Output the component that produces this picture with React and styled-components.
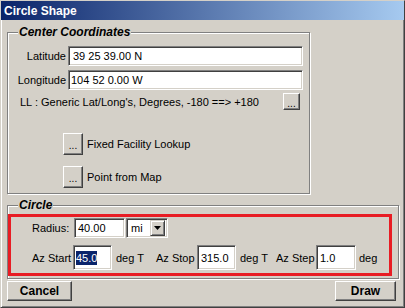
import React from "react";
import styled, { createGlobalStyle } from "styled-components";

const GlobalStyle = createGlobalStyle`
  html, body {
    margin: 0;
    padding: 0;
    background: #d4d0c8;
  }
  * {
    box-sizing: border-box;
  }
`;

const Window = styled.div`
  width: 405px;
  height: 308px;
  background: #d4d0c8;
  border: 1px solid;
  border-color: #d4d0c8 #404040 #404040 #d4d0c8;
  box-shadow: inset 1px 1px 0 #fff, inset -1px -1px 0 #808080;
  font-family: "Liberation Sans", Arial, sans-serif;
  font-size: 11px;
  color: #000;
  display: flex;
  flex-direction: column;
`;

const TitleBar = styled.div`
  height: 19px;
  flex: none;
  display: flex;
  align-items: center;
  padding-left: 3px;
  background: linear-gradient(to right, #0a246a, #a6caf0);
  color: #fff;
  font-weight: bold;
  font-size: 12px;
`;

const Body = styled.div`
  display: flex;
  flex-direction: column;
  padding: 12px 6px 0 6px;
`;

const Group = styled.div`
  position: relative;
  width: ${p => p.$width}px;
  margin-top: ${p => p.$top || 0}px;
  border: 1px solid #808080;
  box-shadow: 1px 1px 0 #fff, inset 1px 1px 0 #fff;
`;

const Caption = styled.span`
  position: absolute;
  top: -8px;
  left: 10px;
  padding: 0 1px;
  line-height: 14px;
  background: #d4d0c8;
  font-weight: bold;
  font-style: italic;
  font-size: 12px;
`;

const CoordGrid = styled.div`
  display: grid;
  grid-template-columns: 58px 235px;
  column-gap: 2px;
  row-gap: 4px;
  padding: 13px 6px 0 0;
  align-items: center;
`;

const FieldLabel = styled.label`
  text-align: right;
  white-space: nowrap;
`;

const TextBox = styled.div`
  height: ${p => p.$height || 20}px;
  width: ${p => (p.$width ? `${p.$width}px` : "auto")};
  background: #fff;
  border: 1px solid;
  border-color: #808080 #fff #fff #808080;
  box-shadow: inset 1px 1px 0 #404040, inset -1px -1px 0 #d4d0c8;
  display: flex;
  align-items: center;
  padding-left: ${p => p.$pad || 4}px;
  white-space: nowrap;
  flex: none;
`;

const Selected = styled.span`
  background: #0a246a;
  color: #fff;
  line-height: 14px;
`;

const LLRow = styled.div`
  display: flex;
  align-items: center;
  justify-content: space-between;
  margin-top: 3px;
  padding: 0 9px 0 12px;
`;

const RaisedButton = styled.button`
  width: ${p => p.$w}px;
  height: ${p => p.$h}px;
  padding: 0;
  flex: none;
  background: #d4d0c8;
  border: 1px solid;
  border-color: #fff #404040 #404040 #fff;
  box-shadow: inset -1px -1px 0 #808080, inset 1px 1px 0 #d4d0c8;
  font-family: "Liberation Sans", Arial, sans-serif;
  font-size: ${p => p.$size || 12}px;
  font-weight: ${p => (p.$bold ? "bold" : "normal")};
  color: #000;
  line-height: 1;
`;

const LookupList = styled.div`
  display: flex;
  flex-direction: column;
  gap: 11px;
  padding: 23px 0 5px 55px;
`;

const LookupRow = styled.div`
  display: flex;
  align-items: center;
  gap: 4px;
`;

const Highlight = styled.div`
  width: 384px;
  margin: 8px 0 2px 0;
  border: 3px solid #e81c24;
  display: flex;
  flex-direction: column;
  gap: 7px;
  padding: 1px 0 3px 21px;
`;

const ParamRow = styled.div`
  display: flex;
  align-items: center;
`;

const Cell = styled.span`
  width: ${p => p.$w}px;
  padding-left: ${p => p.$pl || 0}px;
  white-space: nowrap;
  flex: none;
`;

const Select = styled.div`
  display: flex;
  align-items: center;
  justify-content: space-between;
  width: 42px;
  height: 20px;
  margin-left: 1px;
  background: #fff;
  border: 1px solid;
  border-color: #808080 #fff #fff #808080;
  box-shadow: inset 1px 1px 0 #404040, inset -1px -1px 0 #d4d0c8;
  padding: 2px 2px 2px 4px;
`;

const DropButton = styled.div`
  width: 15px;
  height: 16px;
  background: #d4d0c8;
  border: 1px solid;
  border-color: #d4d0c8 #404040 #404040 #d4d0c8;
  box-shadow: inset 1px 1px 0 #fff, inset -1px -1px 0 #808080;
  display: flex;
  align-items: center;
  justify-content: center;
`;

const Footer = styled.div`
  display: flex;
  justify-content: space-between;
  margin-top: 2px;
  padding-right: 2px;
`;

const Dots = styled.span`
  position: relative;
  top: 2px;
`;

export default function App() {
  return (
    <>
      <GlobalStyle />
      <Window>
        <TitleBar>Circle Shape</TitleBar>
        <Body>
          <Group $width={303}>
            <Caption>Center Coordinates</Caption>
            <CoordGrid>
              <FieldLabel>Latitude</FieldLabel>
              <TextBox>39 25 39.00 N</TextBox>
              <FieldLabel>Longitude</FieldLabel>
              <TextBox $pad={2}>104 52 0.00 W</TextBox>
            </CoordGrid>
            <LLRow>
              <span>LL : Generic Lat/Long's, Degrees, -180 ==&gt; +180</span>
              <RaisedButton $w={17} $h={17} $size={10}>
                <Dots>...</Dots>
              </RaisedButton>
            </LLRow>
            <LookupList>
              <LookupRow>
                <RaisedButton $w={20} $h={22} $size={10}>
                  <Dots>...</Dots>
                </RaisedButton>
                <span>Fixed Facility Lookup</span>
              </LookupRow>
              <LookupRow>
                <RaisedButton $w={20} $h={22} $size={10}>
                  <Dots>...</Dots>
                </RaisedButton>
                <span>Point from Map</span>
              </LookupRow>
            </LookupList>
          </Group>

          <Group $width={392} $top={11}>
            <Caption>Circle</Caption>
            <Highlight>
              <ParamRow>
                <Cell $w={42}>Radius:</Cell>
                <TextBox $width={51} $pad={3}>
                  40.00
                </TextBox>
                <Select>
                  <span>mi</span>
                  <DropButton>
                    <svg width="7" height="4" viewBox="0 0 7 4">
                      <path d="M0 0h7L3.5 4z" fill="#000" />
                    </svg>
                  </DropButton>
                </Select>
              </ParamRow>
              <ParamRow>
                <Cell $w={41}>Az Start</Cell>
                <TextBox $width={39} $height={25} $pad={2}>
                  <Selected>45.0</Selected>
                </TextBox>
                <Cell $w={44} $pl={4}>deg T</Cell>
                <Cell $w={41}>Az Stop</Cell>
                <TextBox $width={39} $height={25} $pad={3}>
                  315.0
                </TextBox>
                <Cell $w={40} $pl={4}>deg T</Cell>
                <Cell $w={40}>Az Step</Cell>
                <TextBox $width={40} $height={25} $pad={3}>
                  1.0
                </TextBox>
                <Cell $w={24} $pl={3}>deg</Cell>
              </ParamRow>
            </Highlight>
          </Group>

          <Footer>
            <RaisedButton $w={65} $h={20} $size={12} $bold>
              Cancel
            </RaisedButton>
            <RaisedButton $w={61} $h={20} $size={12} $bold>
              Draw
            </RaisedButton>
          </Footer>
        </Body>
      </Window>
    </>
  );
}
